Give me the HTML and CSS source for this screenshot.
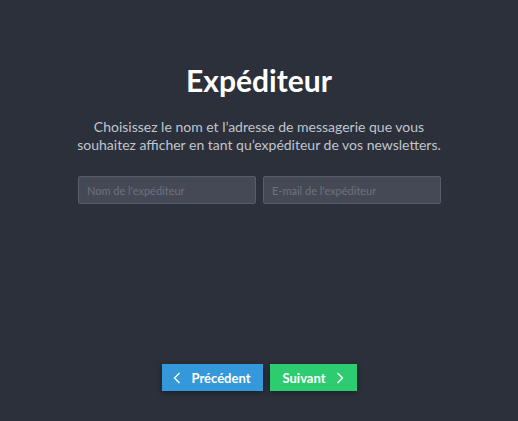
FILE: index.html
```html
<!DOCTYPE html>
<html lang="fr">
<head>
<meta charset="utf-8">
<link rel="stylesheet" href="styles.css">
</head>
<body>
<main class="page">
  <section class="step">
    <h1 class="title">Expéditeur</h1>
    <p class="lead">Choisissez le nom et l’adresse de messagerie que vous<br>souhaitez afficher en tant qu’expéditeur de vos newsletters.</p>
    <div class="fields">
      <input class="field" type="text" placeholder="Nom de l'expéditeur">
      <input class="field" type="text" placeholder="E-mail de l'expéditeur">
    </div>
  </section>
  <nav class="actions">
    <button class="btn btn-prev" type="button">
      <svg class="chev" width="8" height="12" viewBox="0 0 8 12"><path d="M6.5 1 L1.5 6 L6.5 11" fill="none" stroke="currentColor" stroke-width="1.4"/></svg>
      Précédent
    </button>
    <button class="btn btn-next" type="button">
      Suivant
      <svg class="chev" width="8" height="12" viewBox="0 0 8 12"><path d="M1.5 1 L6.5 6 L1.5 11" fill="none" stroke="currentColor" stroke-width="1.4"/></svg>
    </button>
  </nav>
</main>
</body>
</html>
```
FILE: styles.css
```css
html, body {
  margin: 0;
  padding: 0;
  background: #2b303b;
  height: 100%;
}
.page {
  height: 421px;
  display: flex;
  flex-direction: column;
  align-items: center;
  font-family: Lato, "Open Sans", sans-serif;
}
.step {
  display: flex;
  flex-direction: column;
  align-items: center;
  padding-top: 62px;
}
.title {
  margin: 0;
  color: #ffffff;
  font-size: 30px;
  font-weight: 700;
  line-height: 36px;
}
.lead {
  margin: 20px 0 0;
  color: #c0c5ce;
  font-size: 14px;
  line-height: 18px;
  text-align: center;
}
.fields {
  display: flex;
  gap: 7px;
  margin-top: 22px;
  padding-left: 1px;
}
.field {
  box-sizing: border-box;
  width: 178px;
  height: 28px;
  background: #454955;
  border: 1px solid #585d69;
  border-radius: 2px;
  padding: 0 8px;
  font-family: Lato, sans-serif;
  font-size: 11px;
  color: #c0c5ce;
  outline: none;
}
.field::placeholder {
  color: #6d727e;
}
.actions {
  display: flex;
  gap: 7px;
  margin-top: auto;
  margin-bottom: 30px;
}
.btn {
  display: flex;
  align-items: center;
  justify-content: center;
  gap: 10px;
  height: 27px;
  border: none;
  border-radius: 0;
  color: #fff;
  font-family: Lato, sans-serif;
  font-size: 13px;
  font-weight: 700;
  box-shadow: 0 2px 6px rgba(0,0,0,0.35);
  padding: 0;
}
.btn-prev {
  width: 101px;
  background: #3498db;
}
.btn-next {
  width: 87px;
  background: #2ecc71;
}
.chev {
  display: block;
}
```
